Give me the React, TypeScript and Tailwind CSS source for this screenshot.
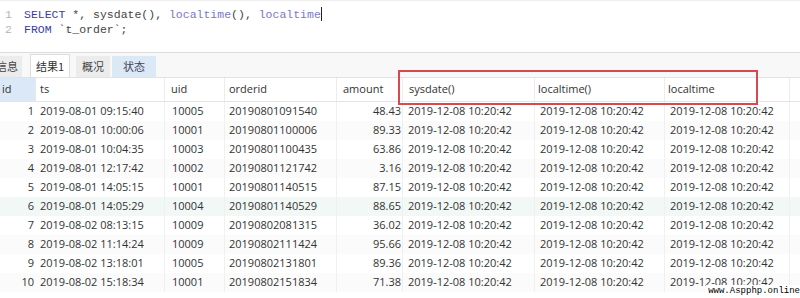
const rows = [
  ["1", "2019-08-01 09:15:40", "10005", "20190801091540", "48.43"],
  ["2", "2019-08-01 10:00:06", "10001", "20190801100006", "89.33"],
  ["3", "2019-08-01 10:04:35", "10003", "20190801100435", "63.86"],
  ["4", "2019-08-01 12:17:42", "10002", "20190801121742", "3.16"],
  ["5", "2019-08-01 14:05:15", "10001", "20190801140515", "87.15"],
  ["6", "2019-08-01 14:05:29", "10004", "20190801140529", "88.65"],
  ["7", "2019-08-02 08:13:15", "10009", "20190802081315", "36.02"],
  ["8", "2019-08-02 11:14:24", "10009", "20190802111424", "95.66"],
  ["9", "2019-08-02 13:18:01", "10005", "20190802131801", "89.36"],
  ["10", "2019-08-02 15:18:34", "10001", "20190802151834", "71.38"],
];

const now = "2019-12-08 10:20:42";
const cols = "grid grid-cols-[36px_129px_60px_112px_66px_132px_130px_125px_10px]";

const App = () => {
  return (
    <div className="relative w-[800px] h-[298px] overflow-hidden bg-white text-[#333] font-['Open_Sans',sans-serif]">
      {/* query editor */}
      <div className="h-[53px] border-t border-[#eee] border-b border-b-[#ddd] pt-[6px] font-['Liberation_Mono',monospace] text-[11.5px] leading-[15px]">
        <div className="flex">
          <span className="w-[24px] pl-[5px] text-[#b5b5b5]">1</span>
          <span className="text-[#3b3ba0]">SELECT</span>
          <span className="whitespace-pre text-[#444]"> *, sysdate(), </span>
          <span className="text-[#7a78c4]">localtime</span>
          <span className="whitespace-pre text-[#444]">(), </span>
          <span className="text-[#7a78c4]">localtime</span>
          <span className="w-px h-[14px] bg-[#222]"></span>
        </div>
        <div className="flex">
          <span className="w-[24px] pl-[5px] text-[#b5b5b5]">2</span>
          <span className="text-[#3b3ba0]">FROM</span>
          <span className="whitespace-pre text-[#444]"> `t_order`;</span>
        </div>
      </div>

      {/* result tabs */}
      <div className="h-[25px] flex items-end bg-[#f8f8f8] text-[11px] font-['Noto_Sans_CJK_SC',sans-serif] border-b border-[#e2e2e2]">
        <div className="h-[21px] w-[30px] -ml-[8px] flex items-center justify-end pr-[4px] bg-[#ececec] text-[#444]">信息</div>
        <div className="h-[23px] w-[40px] ml-[8px] flex items-center justify-center bg-white border border-b-0 border-[#ddd] text-[#333]">结果1</div>
        <div className="h-[21px] w-[34px] ml-[6px] flex items-center justify-center bg-[#ececec] text-[#444]">概况</div>
        <div className="h-[21px] w-[44px] ml-[2px] flex items-center justify-center bg-[#dbe8f6] text-[#445]">状态</div>
      </div>

      {/* grid header */}
      <div className={`${cols} h-[24px] text-[11px] border-b border-[#e4e4e4] bg-white`}>
        <div className="bg-[#dae8f8] pl-[2px] flex items-center border-r border-[#e8e8e8]">id</div>
        <div className="pl-[4px] flex items-center border-r border-[#ececec]">ts</div>
        <div className="pl-[6px] flex items-center border-r border-[#ececec]">uid</div>
        <div className="pl-[4px] flex items-center border-r border-[#ececec]">orderid</div>
        <div className="pl-[6px] flex items-center border-r border-[#ececec]">amount</div>
        <div className="pl-[6px] flex items-center border-r border-[#ececec]">sysdate()</div>
        <div className="pl-[3px] flex items-center border-r border-[#ececec]">localtime()</div>
        <div className="pl-[3px] flex items-center border-r border-[#ececec]">localtime</div>
        <div></div>
      </div>

      {/* grid rows */}
      <div className="text-[11px]">
        {rows.map((r, i) => (
          <div
            key={r[0]}
            className={`${cols} h-[19px] ${i === 5 ? "bg-[#f1f8f6]" : i % 2 === 1 ? "bg-[#fbfbfb]" : "bg-white"}`}
          >
            <div className="pr-[2px] flex items-center justify-end">{r[0]}</div>
            <div className="pl-[4px] flex items-center border-r border-[#f0f0f0]">{r[1]}</div>
            <div className="pl-[7px] flex items-center border-r border-[#f0f0f0]">{r[2]}</div>
            <div className="pl-[4px] flex items-center border-r border-[#f0f0f0]">{r[3]}</div>
            <div className="pr-[1px] flex items-center justify-end border-r border-[#f0f0f0]">{r[4]}</div>
            <div className="pl-[5px] flex items-center border-r border-[#f0f0f0]">{now}</div>
            <div className="pl-[5px] flex items-center border-r border-[#f0f0f0]">{now}</div>
            <div className="pl-[5px] flex items-center border-r border-[#f0f0f0]">{now}</div>
            <div></div>
          </div>
        ))}
      </div>

      {/* annotation box */}
      <div className="absolute left-[398px] top-[70px] w-[360px] h-[35px] border-2 border-[#d9484c]"></div>

      {/* watermark */}
      <div className="absolute right-0 bottom-0 bg-white pl-[2px] h-[13px] leading-[13px] text-[9px] text-black font-['Liberation_Mono',monospace]">
        www.Aspphp.online
      </div>
    </div>
  );
};

export default App;
